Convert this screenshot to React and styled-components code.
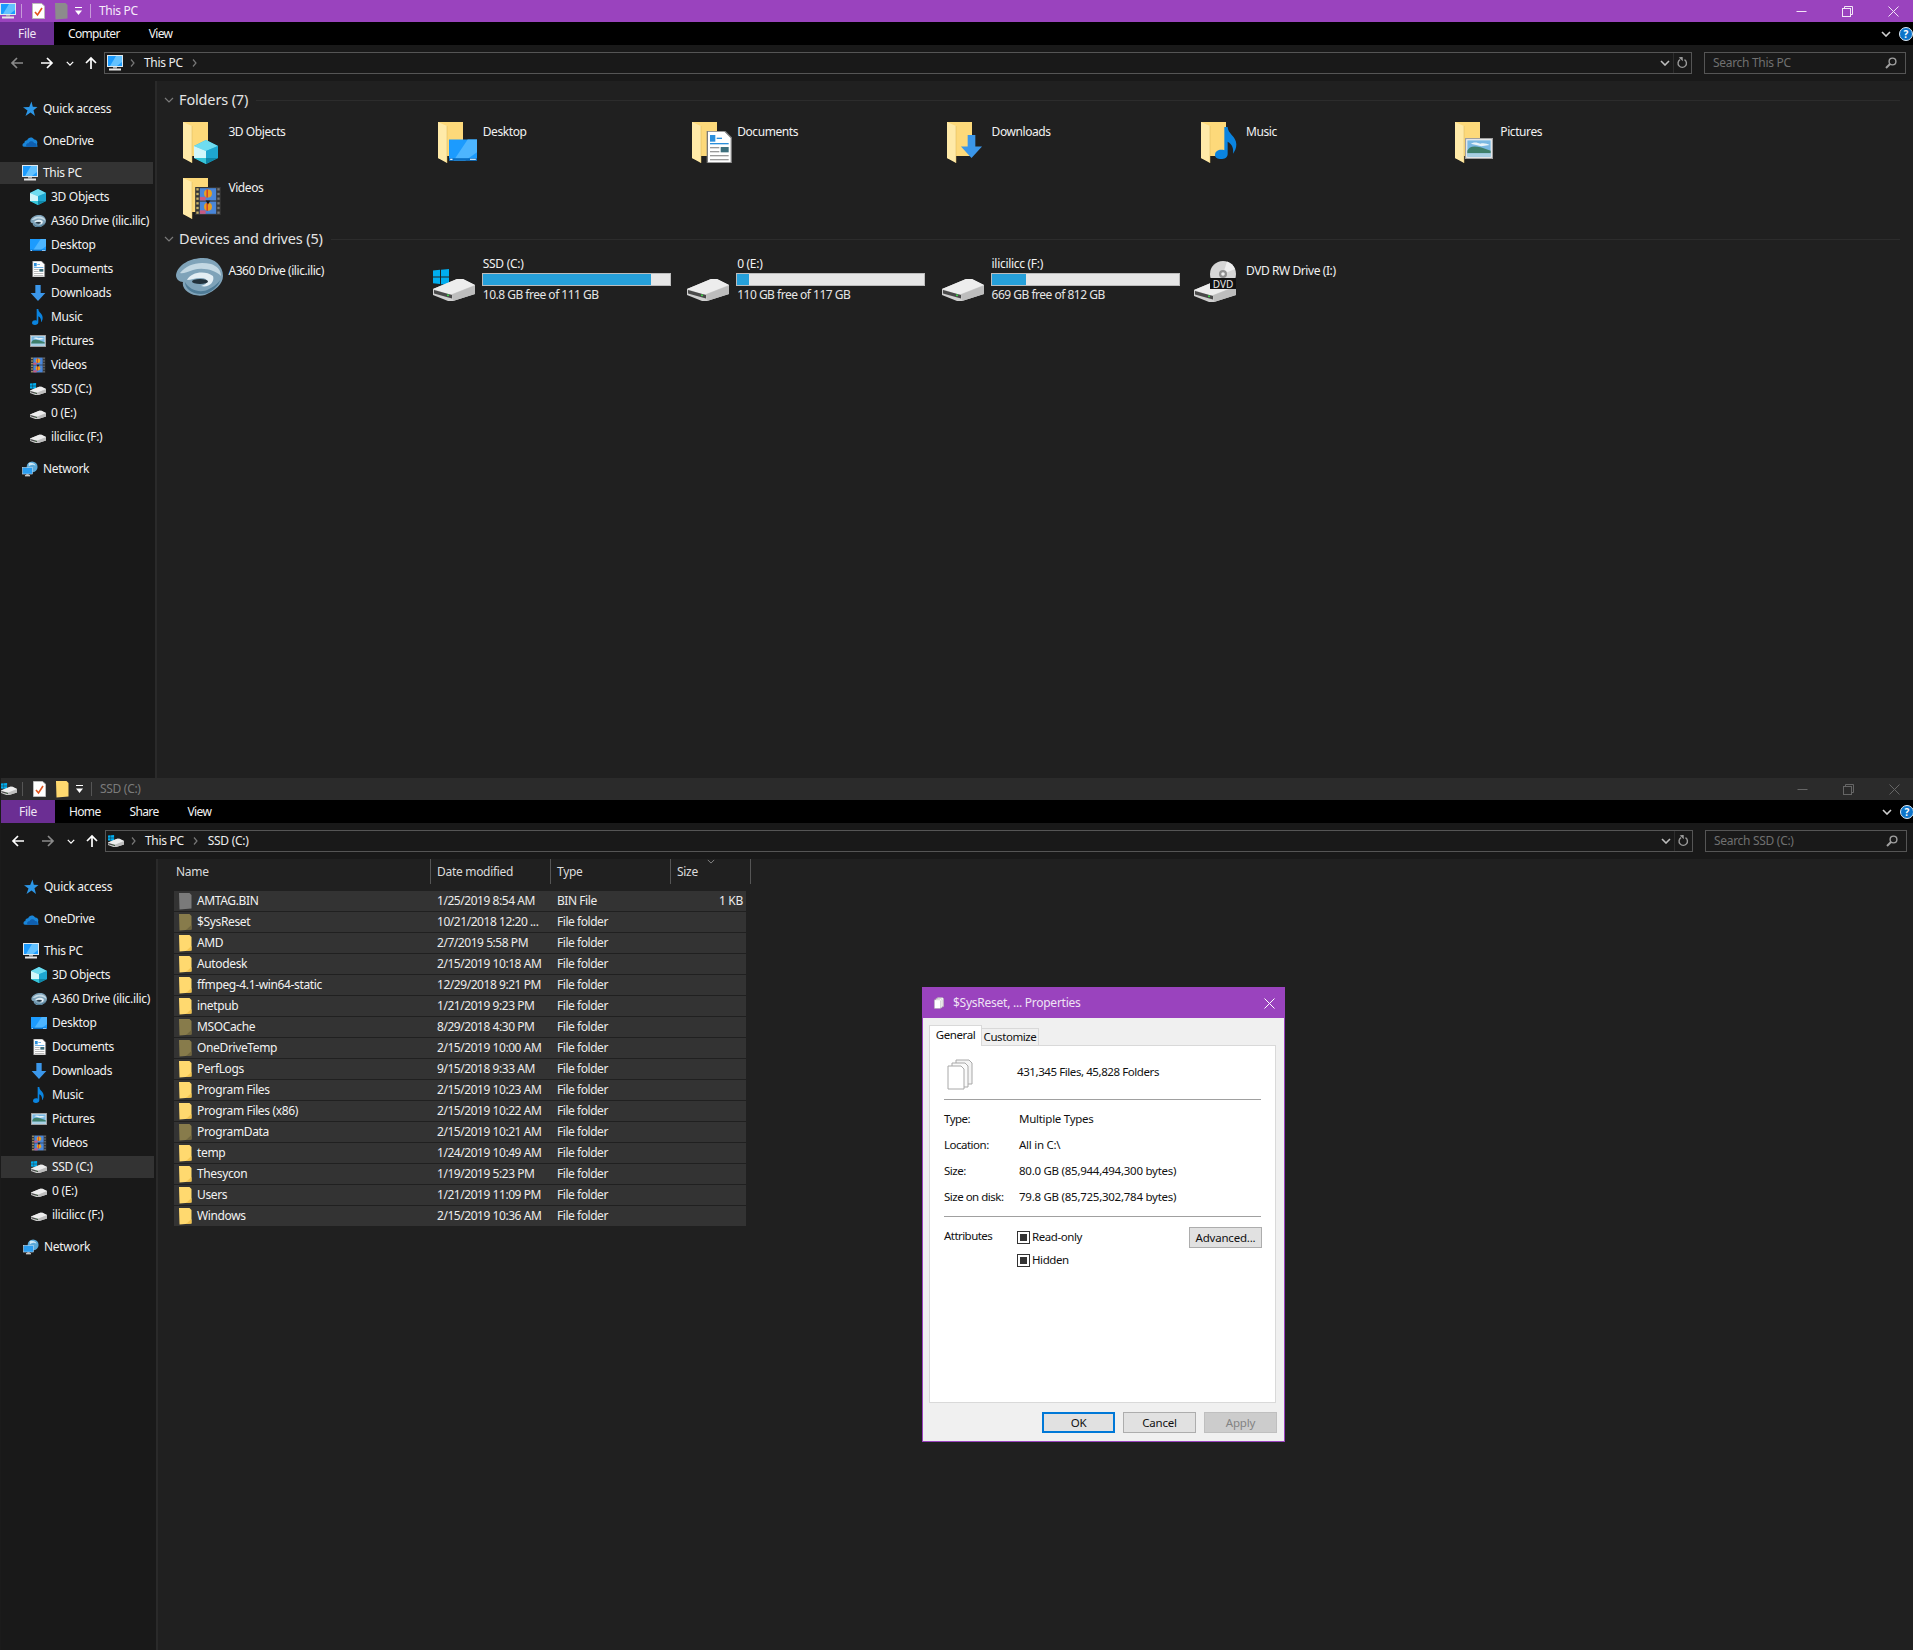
import React from "react";
import styled, { createGlobalStyle } from "styled-components";

const Global = createGlobalStyle`
  html, body { margin: 0; padding: 0; background: #1b1b1b; }
  * { box-sizing: border-box; }
  body { font-family: "Noto Sans", "Open Sans", "Liberation Sans", sans-serif; font-size: 12px; color: #f2f2f2; }
`;

const Page = styled.div`
  position: relative; width: 1913px; height: 1650px; overflow: hidden;
  display: flex; flex-direction: column; background: #1b1b1b;
  letter-spacing: -0.3px;
`;
const Win = styled.section`
  height: ${p => p.$h}px; margin-left: ${p => p.$x}px; width: 1913px;
  display: flex; flex-direction: column; flex: none;
`;
const TitleBar = styled.header`
  height: 22px; flex: none; display: flex; align-items: center;
  background: ${p => (p.$active ? "#9a43be" : "#2b2b2b")};
`;
const QuickSlot = styled.span`
  flex: none; width: ${p => p.$w}px; display: flex; align-items: center; justify-content: ${p => p.$align || "center"};
`;
const QuickSep = styled.span`
  flex: none; width: 1px; height: 14px; background: ${p => (p.$active ? "#c79ad9" : "#555")};
`;
const TitleText = styled.span`
  margin-left: 8px; padding-bottom: 2px; color: ${p => (p.$active ? "#f6eafa" : "#7b7b7b")};
`;
const WinButtons = styled.div`
  margin-left: auto; margin-right: -3px; display: flex;
`;
const WinButton = styled.span`
  width: 45.7px; height: 22px; display: flex; align-items: center; justify-content: center;
  color: ${p => (p.$active ? "#f2e6f7" : "#666")};
`;
const RibbonBar = styled.nav`
  height: 23px; flex: none; background: #000; display: flex; align-items: center;
`;
const FileTab = styled.span`
  width: 54px; height: 23px; background: #6b2e93; display: flex; align-items: center; justify-content: center; color: #f0e6f5;
`;
const RibbonTabs = styled.div`
  display: flex; gap: 29px; padding-left: 14px; color: #f2f2f2; letter-spacing: -0.65px;
`;
const RibbonRight = styled.div`
  margin-left: auto; display: flex; align-items: center; gap: 8px;
`;
const HelpDot = styled.span`
  width: 14px; height: 14px; border-radius: 50%; background: #0d74c9; border: 1px solid #dfeaf5; color: #fff;
  font-size: 10px; font-weight: 700; line-height: 12px; text-align: center; letter-spacing: 0;
`;
const AddressRow = styled.div`
  height: 36px; flex: none; background: #191919; display: flex; align-items: center; padding: 7px 7px 7px 0;
`;
const NavSlot = styled.span`
  width: ${p => p.$w}px; flex: none; display: flex; align-items: center; justify-content: center;
  color: ${p => (p.$dim ? "#8a8a8a" : "#fff")};
`;
const AddressBox = styled.div`
  flex: 1; height: 22px; margin-left: 2px; border: 1px solid #555; display: flex; align-items: center; padding-left: 2px; color: #eee;
`;
const Crumb = styled.span`
  flex: none; margin-left: ${p => p.$ml}px; padding-bottom: 2px;
`;
const CrumbChevron = styled.span`
  flex: none; margin-left: ${p => p.$ml}px; display: flex; color: #777;
`;
const AddressTools = styled.div`
  margin-left: auto; display: flex; align-items: center; height: 100%; color: #9a9a9a;
`;
const ToolSlot = styled.span`
  width: ${p => p.$w}px; height: 100%; display: flex; align-items: center; justify-content: center;
  border-left: ${p => (p.$split ? "1px solid #2d2d2d" : "none")};
`;
const SearchBox = styled.div`
  width: 202px; height: 22px; margin-left: 12px; flex: none; border: 1px solid #555; display: flex; align-items: center;
  justify-content: space-between; padding: 0 8px; color: #707070;
`;
const SearchText = styled.span`
  padding-bottom: 2px;
`;
const SearchGlass = styled.span`
  display: flex; color: #a0a0a0;
`;
const Body = styled.div`
  flex: 1; display: flex; min-height: 0;
`;
const Sidebar = styled.aside`
  width: 157px; flex: none; background: #191919; border-right: 2px solid #2a2a2a; padding-top: 17px;
`;
const NavRow = styled.div`
  height: 22px; width: 153px; margin-top: ${p => (p.$child ? 2 : p.$first ? 0 : 10)}px;
  padding-left: ${p => (p.$child ? 30 : 22)}px; display: flex; align-items: center; white-space: nowrap;
  background: ${p => (p.$selected ? "#333" : "transparent")}; color: #f2f2f2;
`;
const NavIcon = styled.span`
  width: 21px; flex: none; display: flex; align-items: center;
`;
const NavLabel = styled.span`
  padding-bottom: 2px;
`;
const Content = styled.main`
  flex: 1; background: #202020; min-width: 0;
`;
const GroupHeader = styled.div`
  height: 20px; padding: 0 13px 0 7px; display: flex; align-items: center; margin-top: ${p => p.$mt}px; color: #e4e4e4;
`;
const GroupChevron = styled.span`
  width: 15px; flex: none; display: flex; color: #7a7a7a;
`;
const GroupTitle = styled.span`
  font-size: 14.5px; white-space: nowrap; letter-spacing: -0.15px; padding-bottom: 2px;
`;
const GroupLine = styled.span`
  flex: 1; height: 1px; background: #2c2c2c; margin-left: 8px;
`;
const TileGrid = styled.div`
  margin-top: 7px; padding-left: 17.4px; display: grid; grid-template-columns: repeat(6, 254.4px); grid-auto-rows: 56px;
`;
const Tile = styled.div`
  display: flex; min-width: 0;
`;
const TileIcon = styled.span`
  width: 54px; flex: none; padding: ${p => p.$pad}; display: block; line-height: 0;
`;
const TileName = styled.span`
  display: block; padding-top: ${p => p.$top}px; line-height: 16px; white-space: nowrap; color: #f2f2f2; letter-spacing: -0.42px;
`;
const DriveGrid = styled(TileGrid)`
  grid-auto-rows: 50px;
`;
const DriveInfo = styled.div`
  display: flex; flex-direction: column; width: 190px; line-height: 16px;
`;
const DriveBar = styled.div`
  width: 189px; height: 13px; margin: 1px 0 1px -1px; background: #e6e6e6; border: 1px solid #bcbcbc; flex: none;
`;
const DriveFill = styled.div`
  height: 100%; background: #26a0da;
`;
const DriveText = styled.span`
  color: #e6e6e6; white-space: nowrap; letter-spacing: -0.5px;
`;
const TableHead = styled.div`
  height: 25px; padding-left: 16px; display: grid; grid-template-columns: 257px 120px 120px 80px; width: 600px;
`;
const HeadCell = styled.div`
  position: relative; border-right: 1px solid #555; padding-left: ${p => p.$pl}px; display: flex; align-items: center; padding-bottom: 1px; color: #dcdcdc;
`;
const SortCaret = styled.span`
  position: absolute; left: 36px; top: 0; display: flex; color: #888;
`;
const TableBody = styled.div`
  margin: 7px 0 0 16px; width: 572px; display: flex; flex-direction: column; gap: 1px;
`;
const TableRow = styled.div`
  height: 20px; background: #333; display: grid; grid-template-columns: 257px 120px 120px 75px; align-items: center;
`;
const NameCell = styled.div`
  display: flex; align-items: center; padding-left: 5px; gap: 5px; white-space: nowrap; letter-spacing: -0.36px;
`;
const NameText = styled.span`
  padding-bottom: 2px;
`;
const DataCell = styled.div`
  padding: 0 0 2px 6px; white-space: nowrap; color: #ececec; letter-spacing: -0.45px;
`;
const SizeCell = styled.div`
  text-align: right; padding: 0 3px 2px 0; color: #ececec;
`;

const Dialog = styled.div`
  position: absolute; left: 922px; top: 987px; width: 363px; height: 455px; background: #f0f0f0;
  border: 1px solid #9a43be; display: flex; flex-direction: column; color: #111;
  font-size: 11.5px; letter-spacing: -0.42px;
`;
const DialogTitle = styled.div`
  height: 30px; flex: none; background: #9a43be; display: flex; align-items: center; padding: 0 0 0 10px; gap: 8px; color: #efe2f5; font-size: 12px; letter-spacing: -0.25px;
`;
const DialogTitleText = styled.span`
  padding-bottom: 2px;
`;
const DialogClose = styled.span`
  margin-left: auto; width: 30px; display: flex; justify-content: center; color: #fff;
`;
const TabStrip = styled.div`
  margin: 7px 0 0 6px; height: 21px; display: flex; align-items: flex-end; position: relative; z-index: 1; flex: none;
`;
const DialogTab = styled.span`
  flex: none; white-space: nowrap;
  width: ${p => p.$w}px; height: ${p => (p.$on ? 21 : 18)}px; background: ${p => (p.$on ? "#fff" : "#f0f0f0")};
  border: 1px solid #d9d9d9; border-bottom: ${p => (p.$on ? "none" : "1px solid #d9d9d9")}; border-left: ${p => (p.$on ? "1px solid #d9d9d9" : "none")};
  display: flex; align-items: center; justify-content: center; padding-bottom: ${p => (p.$on ? 3 : 1)}px;
`;
const Panel = styled.div`
  margin: -1px 0 0 6px; width: 347px; height: 358px; background: #fff; border: 1px solid #d9d9d9; padding: 13px 14px 0; flex: none;
`;
const SummaryRow = styled.div`
  height: 40px; display: grid; grid-template-columns: 73px 1fr;
`;
const SummaryIcon = styled.span`
  padding-left: 3px; line-height: 0;
`;
const SummaryText = styled.span`
  padding-top: 5px; line-height: 16px; white-space: nowrap;
`;
const Rule = styled.div`
  height: 1px; background: #a0a0a0;
`;
const PropList = styled.div`
  margin: 6px 0; display: grid; grid-template-columns: 75px 1fr; grid-auto-rows: 26px; align-items: center;
`;
const PropLabel = styled.span`white-space: nowrap; padding-bottom: 1px; letter-spacing: -0.5px;`;
const PropValue = styled.span`white-space: nowrap; padding-bottom: 1px; letter-spacing: -0.26px;`;
const AttrRow = styled.div`
  margin: 10px -1px 0 0; display: grid; grid-template-columns: 73px 1fr 73px;
`;
const AttrLabel = styled.span`
  padding-top: 1px; line-height: 16px; letter-spacing: -0.55px;
`;
const AttrChecks = styled.div`
  padding-top: 2px; display: flex; flex-direction: column; gap: 7px;
`;
const AttrCheck = styled.label`
  height: 16px; display: flex; align-items: center; gap: 2px; line-height: 16px;
`;
const CheckBox = styled.span`
  width: 13px; height: 13px; border: 1px solid #333; padding: 2px; background: #fff; flex: none;
  &::after { content: ""; display: block; width: 7px; height: 7px; background: #333; }
`;
const DialogButton = styled.span`
  width: 73px; height: 21px; display: flex; align-items: center; justify-content: center; flex: none; letter-spacing: -0.2px;
  background: ${p => (p.$off ? "#ccc" : "#e1e1e1")};
  border: ${p => (p.$main ? "2px solid #0078d7" : p.$off ? "1px solid #bfbfbf" : "1px solid #adadad")};
  color: ${p => (p.$off ? "#838383" : "#111")};
`;
const DialogFooter = styled.div`
  margin-top: 9px; padding-right: 7px; display: flex; justify-content: flex-end; gap: 8px;
`;

/* ------------- drawings ------------- */
const GLYPHS = {
  cube: (
    <>
      <polygon points="12,0 24,6 24,18 12,24 0,18 0,6" fill="#25b8dc" />
      <polygon points="12,0 24,6 12,11 0,6" fill="#6fdcf0" />
      <polygon points="0,6 12,11 12,18 0,18" fill="#d2f6fa" />
      <polygon points="12,11 24,6 24,18 12,18" fill="#1ea6d0" />
      <polygon points="0,18 12,18 12,24" fill="#38c5d8" />
      <polygon points="12,18 24,18 12,24" fill="#0f86a8" />
    </>
  ),
  desktop: (
    <>
      <rect x="0" y="3" width="24" height="18" fill="#1c9bfe" />
      <polygon points="4,21 16,3 24,3 24,14 14,21" fill="#4db5ff" />
      <rect x="0" y="19" width="24" height="2" fill="#0a6fc4" />
      <rect x="1" y="19.5" width="2" height="1" fill="#fff" />
      <rect x="18" y="19.5" width="5" height="1" fill="#cfe9ff" />
    </>
  ),
  docs: (
    <>
      <path d="M4 0H17L22 5V24H4Z" fill="#fff" stroke="#7a7a7a" />
      <rect x="6" y="3" width="4" height="5" fill="#2b8fdc" />
      <rect x="11" y="5" width="4" height="1" fill="#2b8fdc" />
      <rect x="6" y="9" width="14" height="1" fill="#2b8fdc" />
      <rect x="6" y="12" width="7" height="1" fill="#999" />
      <rect x="6" y="15" width="7" height="1" fill="#999" />
      <rect x="6" y="18" width="14" height="1" fill="#999" />
      <rect x="6" y="21" width="14" height="1" fill="#999" />
      <rect x="14" y="12" width="6" height="4" fill="#3d6f7d" />
    </>
  ),
  download: (
    <path d="M8 0H16V12H23L12 24L1 12H8Z" fill="#3b97ea" />
  ),
  music: (
    <path d="M10 0H12.5C12.5 5 19 7 19 13C19 16 18 18 16.5 20C17 16 16 13 12.5 11V20C12.5 23 10 24 7.5 24C5 24 3 23 3 21C3 18 5.5 17 7.5 17C8.5 17 9.5 17 10 17.5Z" fill="#0a84e0" />
  ),
  picture: (
    <>
      <rect x="0.5" y="3.5" width="23" height="17" fill="#f2f4f5" stroke="#a0a0a0" />
      <rect x="2" y="5" width="20" height="14" fill="#7ab8e2" />
      <path d="M5 8C8 6 11 7 13 8C16 7 19 8 21 9L14 10Z" fill="#e8f3f9" />
      <path d="M2 14C4 9 10 9 22 14V16H2Z" fill="#3e7f6a" />
      <path d="M2 16H22V19H2Z" fill="#a9cfe2" />
    </>
  ),
  video: (
    <>
      <rect x="1" y="0" width="22" height="24" fill="#353535" />
      <rect x="5" y="1" width="14" height="10.5" fill="#4a86d8" />
      <rect x="5" y="12.5" width="14" height="10.5" fill="#4a86d8" />
      <circle cx="12" cy="5.5" r="3.4" fill="#e8a020" />
      <rect x="10.7" y="2" width="1.2" height="7" fill="#d03a2c" />
      <rect x="5" y="8.5" width="5" height="3" fill="#c85a80" />
      <circle cx="12" cy="17" r="3.4" fill="#e8a020" />
      <rect x="10.7" y="13.5" width="1.2" height="7" fill="#d03a2c" />
      <polygon points="10,11.5 14,11.5 12,15" fill="#1a1a1a" />
      <rect x="5" y="20" width="5" height="3" fill="#c85a80" />
      {[1, 5, 9, 13, 17, 21].map(y => (
        <React.Fragment key={y}>
          <rect x="2" y={y} width="2" height="2" fill="#c8b26a" />
          <rect x="20" y={y} width="2" height="2" fill="#777" />
        </React.Fragment>
      ))}
    </>
  ),
};

const Glyph = ({ name, size = 16 }) => (
  <svg width={size} height={size} viewBox="0 0 24 24">{GLYPHS[name]}</svg>
);

const OVERLAY = {
  cube: [11, 18, 24],
  desktop: [11, 14, 28],
  docs: [10, 9, 32],
  download: [13, 13, 23],
  music: [10, 5, 32],
  picture: [10, 12.5, 28],
  video: [11, 9, 28],
};

const LibraryFolder = ({ name }) => {
  const [x, y, s] = OVERLAY[name];
  return (
    <svg width="42" height="44" viewBox="0 0 42 44">
      <path d="M0 0H25V34H9V40L0 36Z" fill="#fdd97a" />
      <path d="M0 0L9 4V41L0 36Z" fill="#ffeaa8" />
      <path d="M9 4V41" stroke="#d9b45a" strokeWidth="0.5" />
      <svg x={x} y={y} width={s} height={s} viewBox="0 0 24 24">{GLYPHS[name]}</svg>
    </svg>
  );
};

const SmallFolder = ({ dim, file }) => (
  <svg width="13" height="17" viewBox="0 0 13 17">
    <path
      d="M0 0H10.5L12.5 2V15.5L0.5 16.5Z"
      fill={file ? "#7a7a7a" : dim ? "#877b4b" : "#ffd96f"}
    />
    {!file && <path d="M7 16L12.5 11V15.5Z" fill={dim ? "#6f653e" : "#f2c350"} />}
  </svg>
);

const DriveBody = ({ y }) => (
  <g transform={`translate(0 ${y})`}>
    <path d="M0 10L24 0H30L42 6V15L20 22H15L0 16Z" fill="#cfcfcf" />
    <path d="M0 10L24 0H30L42 6L19 15H15Z" fill="#ededed" />
    <polygon points="1,11 19,16 19,19.5 1,14.5" fill="#4a4a4a" />
    <path d="M19 15.5L42 6.5V15L20 22Z" fill="#bdbdbd" />
    <rect x="14" y="15.5" width="2" height="1.6" fill="#3fd04a" />
  </g>
);

const Drive = ({ win, w = 42 }) => (
  <svg width={w} height={(w * 32) / 42} viewBox="0 0 42 32">
    {win && (
      <g fill="#00adef">
        <polygon points="0,1.5 7,0.8 7,7.5 0,7.5" />
        <polygon points="8,0.7 16,0 16,7.5 8,7.5" />
        <polygon points="0,8.5 7,8.5 7,15 0,14.3" />
        <polygon points="8,8.5 16,8.5 16,16 8,15.2" />
      </g>
    )}
    <DriveBody y={10} />
  </svg>
);

const DvdDrive = () => (
  <svg width="43" height="41" viewBox="0 0 43 41">
    <DriveBody y={19} />
    <circle cx="29" cy="13" r="13" fill="#d6d6d6" />
    <path d="M29 13L33 0.5A13 13 0 0 1 41 8Z" fill="#efefef" />
    <circle cx="29" cy="13" r="4" fill="#8f8f8f" />
    <circle cx="29" cy="13" r="1.8" fill="#efefef" />
    <rect x="16" y="17" width="26" height="11" fill="#111" />
    <text x="29" y="26.5" fontSize="10" letterSpacing="0" fill="#e8e8e8" textAnchor="middle" fontFamily="Noto Sans, sans-serif">DVD</text>
  </svg>
);

const A360 = ({ size = 16 }) => (
  <svg width={size} height={(size * 38) / 48} viewBox="0 0 48 38">
    <path d="M1 17C3 6 16 0 28 0C40 0 48 8 48 18C48 26 40 33 30 37C18 40 6 32 8 24C4 24 1 21 1 17Z" fill="#7fa3b9" />
    <path d="M5 15C12 6 24 3 36 6C42 8 46 12 46 18C40 12 28 9 18 12C12 14 8 16 5 15Z" fill="#c3d8e3" />
    <path d="M10 24C14 32 26 36 34 31C42 27 46 22 46 20C44 28 36 36 26 36C16 36 10 30 10 24Z" fill="#4f7b96" />
    <path d="M12 22C16 14 30 12 38 18C40 24 34 30 26 28C34 26 34 20 26 20C20 20 16 22 12 22Z" fill="#e3eef4" />
    <ellipse cx="25" cy="23.5" rx="8" ry="2.5" fill="#22313b" />
  </svg>
);

const Pc = ({ size = 16 }) => (
  <svg width={size} height={size} viewBox="0 0 16 16">
    <rect x="0.5" y="0.5" width="15" height="11" fill="#1c9bfe" stroke="#dfe8ee" />
    <polygon points="3,11 9,1 15,1 15,7 10,11" fill="#63c2ff" />
    <rect x="6" y="12" width="4" height="1.5" fill="#aaa" />
    <rect x="2" y="13.5" width="12" height="2" fill="#e6e6e6" />
  </svg>
);

const Star = () => (
  <svg width="16" height="16" viewBox="0 0 16 16">
    <polygon points="9.5,0.5 10.8,5.8 15.5,6 11.5,9.3 13,15 8.5,11.5 3.5,15 5.5,9.5 1,6.3 7.2,6" fill="#2c96e6" />
  </svg>
);

const Cloud = () => (
  <svg width="16" height="16" viewBox="0 0 17 16">
    <path d="M2 14C0 14 0 10 2.5 10C2.5 8 4 7 5.5 7.2C6.5 4 11 3 13 6.5C15.5 6.5 17 9 16 11L16.5 14Z" fill="#1a86d9" />
    <path d="M5 14C3.5 12 5 10 7 10.3C8 7.5 12 7.7 12.8 10.2C15 10 16 12 15.5 14Z" fill="#0f5fb0" />
  </svg>
);

const NetGlobe = () => (
  <svg width="16" height="16" viewBox="0 0 19 18">
    <circle cx="12" cy="6.5" r="6.5" fill="#5aa9d8" />
    <path d="M8 2C11 1 15 2 16 5C13 3 10 4 8 6Z" fill="#cfe8f5" />
    <rect x="0.5" y="7" width="12" height="8" fill="#2a9df0" stroke="#dbe6ee" strokeWidth="0.6" />
    <rect x="5" y="15" width="3" height="1.5" fill="#bbb" />
    <rect x="3.5" y="16.3" width="6" height="1.4" fill="#ddd" />
  </svg>
);

const Notepad = () => (
  <svg width="13" height="16" viewBox="0 0 13 16">
    <path d="M0.5 0.5H9.5L12.5 3V15.5H0.5Z" fill="#fff" stroke="#bbb" />
    <path d="M3 9L5.5 12L10 5" fill="none" stroke="#e2541c" strokeWidth="1.6" />
  </svg>
);

const QuickFolder = ({ gray }) => (
  <svg width="13" height="17" viewBox="0 0 13 17">
    <path d="M0 0H10.5L12.5 2V15.5L0.5 16.5Z" fill={gray ? "#8c8c8c" : "#ffd96f"} />
  </svg>
);

const Caret = () => (
  <svg width="8" height="9" viewBox="0 0 8 9">
    <rect x="0" y="0" width="7" height="1" fill="#fff" />
    <polygon points="0,3.5 7,3.5 3.5,8" fill="#fff" />
  </svg>
);

const Chevron = ({ w = 10, h = 6, c = "currentColor", sw = 1.2 }) => (
  <svg width={w} height={h} viewBox="0 0 10 6">
    <path d="M1 1L5 5L9 1" fill="none" stroke={c} strokeWidth={sw} />
  </svg>
);
const ChevRight = () => (
  <svg width="5" height="8" viewBox="0 0 5 8">
    <path d="M1 0.5L4 4L1 7.5" fill="none" stroke="currentColor" strokeWidth="1.2" />
  </svg>
);
const Arrow = ({ dir }) => {
  const rot = { left: 0, right: 180, up: 90 }[dir];
  return (
    <svg width="14" height="14" viewBox="0 0 14 14">
      <g transform={`rotate(${rot} 7 7)`}>
        <path d="M13 7H2M7 2L2 7L7 12" fill="none" stroke="currentColor" strokeWidth="1.7" />
      </g>
    </svg>
  );
};
const Refresh = () => (
  <svg width="11" height="12" viewBox="0 0 11 12">
    <path d="M7.5 2.6A4.2 4.2 0 1 1 3 2.6" fill="none" stroke="currentColor" strokeWidth="1.4" />
    <polygon points="2,0 6,0 5.5,4.5" fill="currentColor" transform="rotate(-10 4 2)" />
  </svg>
);
const Glass = () => (
  <svg width="12" height="12" viewBox="0 0 12 12">
    <circle cx="7.5" cy="4.5" r="3.4" fill="none" stroke="currentColor" strokeWidth="1.4" />
    <path d="M5 7L1 11" stroke="currentColor" strokeWidth="2" />
  </svg>
);
const Minimize = () => (
  <svg width="11" height="11" viewBox="0 0 11 11"><path d="M0.5 5.5H10.5" stroke="currentColor" /></svg>
);
const Restore = () => (
  <svg width="11" height="11" viewBox="0 0 11 11">
    <rect x="0.5" y="2.5" width="8" height="8" fill="none" stroke="currentColor" />
    <path d="M2.5 2.5V0.5H10.5V8.5H8.5" fill="none" stroke="currentColor" />
  </svg>
);
const CloseX = () => (
  <svg width="11" height="11" viewBox="0 0 11 11"><path d="M0.5 0.5L10.5 10.5M10.5 0.5L0.5 10.5" stroke="currentColor" /></svg>
);
const DialogGlyph = ({ w = 12, h = 12, line = "#777" }) => (
  <svg width={w} height={h} viewBox="0 0 26 31">
    <path d="M9 1H22L25 4V25H9Z" fill="#f4f4f4" stroke={line} strokeWidth="1" />
    <path d="M5 4H18L21 7V28H5Z" fill="#fafafa" stroke={line} strokeWidth="1" />
    <path d="M1 7H14L17 10V30H1Z" fill="#fff" stroke={line} strokeWidth="1" />
  </svg>
);

/* ------------- data ------------- */
const NAV_CHILDREN = [
  ["3D Objects", <Glyph name="cube" />],
  ["A360 Drive (ilic.ilic)", <A360 />],
  ["Desktop", <Glyph name="desktop" />],
  ["Documents", <Glyph name="docs" />],
  ["Downloads", <Glyph name="download" />],
  ["Music", <Glyph name="music" />],
  ["Pictures", <Glyph name="picture" />],
  ["Videos", <Glyph name="video" />],
  ["SSD (C:)", <Drive win w={16} />],
  ["0 (E:)", <Drive w={16} />],
  ["ilicilicc (F:)", <Drive w={16} />],
];
const FOLDERS = [
  ["3D Objects", "cube"], ["Desktop", "desktop"], ["Documents", "docs"], ["Downloads", "download"],
  ["Music", "music"], ["Pictures", "picture"], ["Videos", "video"],
];
const DRIVES = [
  ["SSD (C:)", "10.8 GB free of 111 GB", 90, true],
  ["0 (E:)", "110 GB free of 117 GB", 6.4, false],
  ["ilicilicc (F:)", "669 GB free of 812 GB", 18.5, false],
];
const FILES = [
  ["AMTAG.BIN", "1/25/2019 8:54 AM", "BIN File", "1 KB", "file"],
  ["$SysReset", "10/21/2018 12:20 ...", "File folder", "", "dim"],
  ["AMD", "2/7/2019 5:58 PM", "File folder", "", ""],
  ["Autodesk", "2/15/2019 10:18 AM", "File folder", "", ""],
  ["ffmpeg-4.1-win64-static", "12/29/2018 9:21 PM", "File folder", "", ""],
  ["inetpub", "1/21/2019 9:23 PM", "File folder", "", ""],
  ["MSOCache", "8/29/2018 4:30 PM", "File folder", "", "dim"],
  ["OneDriveTemp", "2/15/2019 10:00 AM", "File folder", "", "dim"],
  ["PerfLogs", "9/15/2018 9:33 AM", "File folder", "", ""],
  ["Program Files", "2/15/2019 10:23 AM", "File folder", "", ""],
  ["Program Files (x86)", "2/15/2019 10:22 AM", "File folder", "", ""],
  ["ProgramData", "2/15/2019 10:21 AM", "File folder", "", "dim"],
  ["temp", "1/24/2019 10:49 AM", "File folder", "", ""],
  ["Thesycon", "1/19/2019 5:23 PM", "File folder", "", ""],
  ["Users", "1/21/2019 11:09 PM", "File folder", "", ""],
  ["Windows", "2/15/2019 10:36 AM", "File folder", "", ""],
];

/* ------------- parts ------------- */
const NavItem = ({ icon, label, ...rest }) => (
  <NavRow {...rest}>
    <NavIcon>{icon}</NavIcon>
    <NavLabel>{label}</NavLabel>
  </NavRow>
);

const NavPane = ({ selected }) => (
  <Sidebar>
    <NavItem $first icon={<Star />} label="Quick access" />
    <NavItem icon={<Cloud />} label="OneDrive" />
    <NavItem $selected={selected === "This PC"} icon={<Pc />} label="This PC" />
    {NAV_CHILDREN.map(([label, icon]) => (
      <NavItem key={label} $child $selected={selected === label} icon={icon} label={label} />
    ))}
    <NavItem icon={<NetGlobe />} label="Network" />
  </Sidebar>
);

const WindowChrome = ({ active, title, appIcon, gray, tabs, backDim, crumbs, search, children, h, x }) => (
  <Win $h={h} $x={x}>
    <TitleBar $active={active}>
      <QuickSlot $w={21} $align="flex-start">{appIcon}</QuickSlot>
      <QuickSep $active={active} />
      <QuickSlot $w={33}><Notepad /></QuickSlot>
      <QuickSlot $w={13}><QuickFolder gray={gray} /></QuickSlot>
      <QuickSlot $w={22}><Caret /></QuickSlot>
      <QuickSep $active={active} />
      <TitleText $active={active}>{title}</TitleText>
      <WinButtons>
        <WinButton $active={active}><Minimize /></WinButton>
        <WinButton $active={active}><Restore /></WinButton>
        <WinButton $active={active}><CloseX /></WinButton>
      </WinButtons>
    </TitleBar>
    <RibbonBar>
      <FileTab>File</FileTab>
      <RibbonTabs>{tabs.map(t => <span key={t}>{t}</span>)}</RibbonTabs>
      <RibbonRight>
        <Chevron c="#cfcfcf" sw={1.6} />
        <HelpDot>?</HelpDot>
      </RibbonRight>
    </RibbonBar>
    <AddressRow>
      <NavSlot $w={34} $dim={backDim}><Arrow dir="left" /></NavSlot>
      <NavSlot $w={26} $dim={!backDim}><Arrow dir="right" /></NavSlot>
      <NavSlot $w={20}><Chevron w={8} h={5} sw={1.6} /></NavSlot>
      <NavSlot $w={22}><Arrow dir="up" /></NavSlot>
      <AddressBox>
        {appIcon}
        {crumbs}
        <AddressTools>
          <ToolSlot $w={16}><Chevron c="#bdbdbd" sw={1.6} /></ToolSlot>
          <ToolSlot $w={18} $split><Refresh /></ToolSlot>
        </AddressTools>
      </AddressBox>
      <SearchBox>
        <SearchText>{search}</SearchText>
        <SearchGlass><Glass /></SearchGlass>
      </SearchBox>
    </AddressRow>
    {children}
  </Win>
);

const SmallSsd = () => <Drive win w={16} />;

const Properties = () => (
  <Dialog>
    <DialogTitle>
      <DialogGlyph w={12} h={12} line="#999" />
      <DialogTitleText>$SysReset, ... Properties</DialogTitleText>
      <DialogClose><CloseX /></DialogClose>
    </DialogTitle>
    <TabStrip>
      <DialogTab $w={53} $on>General</DialogTab>
      <DialogTab $w={57}>Customize</DialogTab>
    </TabStrip>
    <Panel>
      <SummaryRow>
        <SummaryIcon><DialogGlyph w={26} h={31} line="#a8a8a8" /></SummaryIcon>
        <SummaryText>431,345 Files, 45,828 Folders</SummaryText>
      </SummaryRow>
      <Rule />
      <PropList>
        <PropLabel>Type:</PropLabel><PropValue>Multiple Types</PropValue>
        <PropLabel>Location:</PropLabel><PropValue>All in C:\</PropValue>
        <PropLabel>Size:</PropLabel><PropValue>80.0 GB (85,944,494,300 bytes)</PropValue>
        <PropLabel>Size on disk:</PropLabel><PropValue>79.8 GB (85,725,302,784 bytes)</PropValue>
      </PropList>
      <Rule />
      <AttrRow>
        <AttrLabel>Attributes</AttrLabel>
        <AttrChecks>
          <AttrCheck><CheckBox />Read-only</AttrCheck>
          <AttrCheck><CheckBox />Hidden</AttrCheck>
        </AttrChecks>
        <DialogButton>Advanced...</DialogButton>
      </AttrRow>
    </Panel>
    <DialogFooter>
      <DialogButton $main>OK</DialogButton>
      <DialogButton>Cancel</DialogButton>
      <DialogButton $off>Apply</DialogButton>
    </DialogFooter>
  </Dialog>
);

export default function App() {
  return (
    <Page>
      <Global />
      <WindowChrome
        active h={778} x={0} title="This PC" appIcon={<Pc />} gray backDim
        tabs={["Computer", "View"]} search="Search This PC"
        crumbs={<>
          <CrumbChevron $ml={7}><ChevRight /></CrumbChevron>
          <Crumb $ml={9}>This PC</Crumb>
          <CrumbChevron $ml={9}><ChevRight /></CrumbChevron>
        </>}
      >
        <Body>
          <NavPane selected="This PC" />
          <Content>
            <GroupHeader $mt={9}>
              <GroupChevron><Chevron /></GroupChevron>
              <GroupTitle>Folders (7)</GroupTitle>
              <GroupLine />
            </GroupHeader>
            <TileGrid>
              {FOLDERS.map(([n, g]) => (
                <Tile key={n}>
                  <TileIcon $pad="5px 0 0 9px"><LibraryFolder name={g} /></TileIcon>
                  <TileName $top={7}>{n}</TileName>
                </Tile>
              ))}
            </TileGrid>
            <GroupHeader $mt={0}>
              <GroupChevron><Chevron /></GroupChevron>
              <GroupTitle>Devices and drives (5)</GroupTitle>
              <GroupLine />
            </GroupHeader>
            <DriveGrid>
              <Tile>
                <TileIcon $pad="2px 0 0 1px"><A360 size={48} /></TileIcon>
                <TileName $top={7}>A360 Drive (ilic.ilic)</TileName>
              </Tile>
              {DRIVES.map(([n, free, pct, win]) => (
                <Tile key={n}>
                  <TileIcon $pad="13px 0 0 4px"><Drive win={win} /></TileIcon>
                  <DriveInfo>
                    <span>{n}</span>
                    <DriveBar><DriveFill style={{ width: `${pct}%` }} /></DriveBar>
                    <DriveText>{free}</DriveText>
                  </DriveInfo>
                </Tile>
              ))}
              <Tile>
                <TileIcon $pad="5px 0 0 2px"><DvdDrive /></TileIcon>
                <TileName $top={7}>DVD RW Drive (I:)</TileName>
              </Tile>
            </DriveGrid>
          </Content>
        </Body>
      </WindowChrome>
      <WindowChrome
        h={872} x={1} title="SSD (C:)" appIcon={<SmallSsd />}
        tabs={["Home", "Share", "View"]} search="Search SSD (C:)"
        crumbs={<>
          <CrumbChevron $ml={7}><ChevRight /></CrumbChevron>
          <Crumb $ml={9}>This PC</Crumb>
          <CrumbChevron $ml={9}><ChevRight /></CrumbChevron>
          <Crumb $ml={10}>SSD (C:)</Crumb>
        </>}
      >
        <Body>
          <NavPane selected="SSD (C:)" />
          <Content>
            <TableHead>
              <HeadCell $pl={2}>Name</HeadCell>
              <HeadCell $pl={6}>Date modified</HeadCell>
              <HeadCell $pl={6}>Type</HeadCell>
              <HeadCell $pl={6}>Size<SortCaret><Chevron w={8} h={5} /></SortCaret></HeadCell>
            </TableHead>
            <TableBody>
              {FILES.map(([n, d, t, s, kind]) => (
                <TableRow key={n}>
                  <NameCell>
                    <SmallFolder dim={kind === "dim"} file={kind === "file"} />
                    <NameText>{n}</NameText>
                  </NameCell>
                  <DataCell>{d}</DataCell>
                  <DataCell>{t}</DataCell>
                  <SizeCell>{s}</SizeCell>
                </TableRow>
              ))}
            </TableBody>
          </Content>
        </Body>
      </WindowChrome>
      <Properties />
    </Page>
  );
}
